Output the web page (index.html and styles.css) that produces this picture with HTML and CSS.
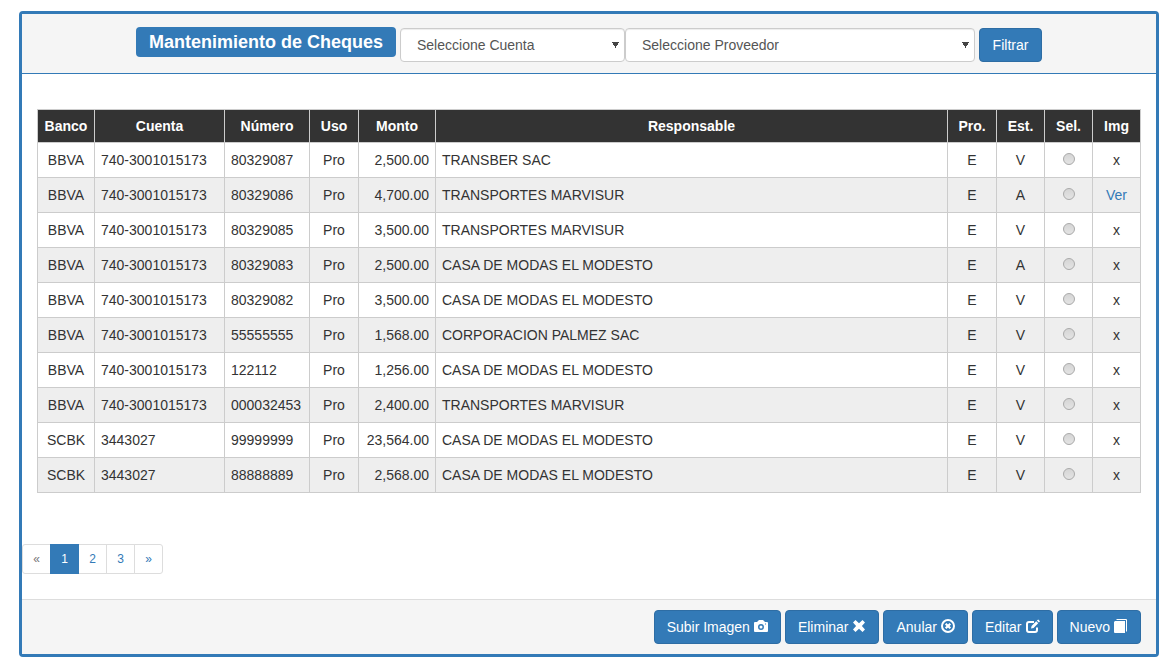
FILE: index.html
```
<!DOCTYPE html>
<html lang="es">
<head>
<meta charset="utf-8">
<title>Mantenimiento de Cheques</title>
<link rel="stylesheet" href="styles.css">
</head>
<body>
<main class="panel">
  <header class="panel-heading">
    <h1 class="title">Mantenimiento de Cheques</h1>
    <form class="filters">
      <select class="select select-account" aria-label="Cuenta"><option>Seleccione Cuenta</option></select>
      <select class="select select-provider" aria-label="Proveedor"><option>Seleccione Proveedor</option></select>
      <button class="btn btn-filter" type="button">Filtrar</button>
    </form>
  </header>
  <div class="panel-body">
    <table class="checks">
      <colgroup>
        <col class="w-bank"><col class="w-account"><col class="w-number"><col class="w-use"><col class="w-amount"><col><col class="w-use"><col class="w-flag"><col class="w-flag"><col class="w-flag">
      </colgroup>
      <thead>
        <tr><th>Banco</th><th>Cuenta</th><th>Número</th><th>Uso</th><th>Monto</th><th>Responsable</th><th>Pro.</th><th>Est.</th><th>Sel.</th><th>Img</th></tr>
      </thead>
      <tbody>
        <tr><td>BBVA</td><td class="left">740-3001015173</td><td class="left">80329087</td><td>Pro</td><td class="right">2,500.00</td><td class="left">TRANSBER SAC</td><td>E</td><td>V</td><td><input class="radio" type="radio" name="sel" aria-label="80329087"></td><td>x</td></tr>
        <tr><td>BBVA</td><td class="left">740-3001015173</td><td class="left">80329086</td><td>Pro</td><td class="right">4,700.00</td><td class="left">TRANSPORTES MARVISUR</td><td>E</td><td>A</td><td><input class="radio" type="radio" name="sel" aria-label="80329086"></td><td><a class="link" href="#">Ver</a></td></tr>
        <tr><td>BBVA</td><td class="left">740-3001015173</td><td class="left">80329085</td><td>Pro</td><td class="right">3,500.00</td><td class="left">TRANSPORTES MARVISUR</td><td>E</td><td>V</td><td><input class="radio" type="radio" name="sel" aria-label="80329085"></td><td>x</td></tr>
        <tr><td>BBVA</td><td class="left">740-3001015173</td><td class="left">80329083</td><td>Pro</td><td class="right">2,500.00</td><td class="left">CASA DE MODAS EL MODESTO</td><td>E</td><td>A</td><td><input class="radio" type="radio" name="sel" aria-label="80329083"></td><td>x</td></tr>
        <tr><td>BBVA</td><td class="left">740-3001015173</td><td class="left">80329082</td><td>Pro</td><td class="right">3,500.00</td><td class="left">CASA DE MODAS EL MODESTO</td><td>E</td><td>V</td><td><input class="radio" type="radio" name="sel" aria-label="80329082"></td><td>x</td></tr>
        <tr><td>BBVA</td><td class="left">740-3001015173</td><td class="left">55555555</td><td>Pro</td><td class="right">1,568.00</td><td class="left">CORPORACION PALMEZ SAC</td><td>E</td><td>V</td><td><input class="radio" type="radio" name="sel" aria-label="55555555"></td><td>x</td></tr>
        <tr><td>BBVA</td><td class="left">740-3001015173</td><td class="left">122112</td><td>Pro</td><td class="right">1,256.00</td><td class="left">CASA DE MODAS EL MODESTO</td><td>E</td><td>V</td><td><input class="radio" type="radio" name="sel" aria-label="122112"></td><td>x</td></tr>
        <tr><td>BBVA</td><td class="left">740-3001015173</td><td class="left">000032453</td><td>Pro</td><td class="right">2,400.00</td><td class="left">TRANSPORTES MARVISUR</td><td>E</td><td>V</td><td><input class="radio" type="radio" name="sel" aria-label="000032453"></td><td>x</td></tr>
        <tr><td>SCBK</td><td class="left">3443027</td><td class="left">99999999</td><td>Pro</td><td class="right">23,564.00</td><td class="left">CASA DE MODAS EL MODESTO</td><td>E</td><td>V</td><td><input class="radio" type="radio" name="sel" aria-label="99999999"></td><td>x</td></tr>
        <tr><td>SCBK</td><td class="left">3443027</td><td class="left">88888889</td><td>Pro</td><td class="right">2,568.00</td><td class="left">CASA DE MODAS EL MODESTO</td><td>E</td><td>V</td><td><input class="radio" type="radio" name="sel" aria-label="88888889"></td><td>x</td></tr>
      </tbody>
    </table>
  </div>
  <nav class="pagination" aria-label="Páginas">
    <a class="page disabled" href="#">«</a>
    <a class="page active" href="#">1</a>
    <a class="page" href="#">2</a>
    <a class="page" href="#">3</a>
    <a class="page" href="#">»</a>
  </nav>
  <footer class="panel-footer">
    <button class="btn" type="button">Subir Imagen
      <svg class="icon" viewBox="0 0 14 14"><path fill="#fff" fill-rule="evenodd" d="M0 4Q0 3 1 3H3L5 1H9L11 3H13Q14 3 14 4V12Q14 13 13 13H1Q0 13 0 12ZM7 5a3 3 0 1 0 0 6a3 3 0 1 0 0-6ZM7 6.500a1.500 1.500 0 1 1 0 3a1.500 1.500 0 1 1 0-3ZM11 4.500h1v1H11Z"/></svg>
    </button>
    <button class="btn" type="button">Eliminar
      <svg class="icon" viewBox="0 0 14 14"><path fill="#fff" d="M3.500 1L7 4.300L10.500 1L13 3.500L9.900 7L13 10.500L10.500 13L7 9.700L3.500 13L1 10.500L4.100 7L1 3.500Z"/></svg>
    </button>
    <button class="btn" type="button">Anular
      <svg class="icon" viewBox="0 0 14 14"><circle cx="7" cy="7" r="6" fill="none" stroke="#fff" stroke-width="2"/><path d="M4.700 4.700L9.300 9.300M9.300 4.700L4.700 9.300" stroke="#fff" stroke-width="2.200"/></svg>
    </button>
    <button class="btn" type="button">Editar
      <svg class="icon" viewBox="0 0 14 14"><path d="M8 3H3Q1 3 1 5V11Q1 13 3 13H9Q11 13 11 11V8.500" fill="none" stroke="#fff" stroke-width="2"/><path fill="#fff" d="M5 9.500L5.600 6.900L10.200 2.300L12.200 4.300L7.600 8.900ZM10.900 1.600L12.200 .500L14 2.300L12.900 3.600Z"/></svg>
    </button>
    <button class="btn" type="button">Nuevo
      <svg class="icon" viewBox="0 0 14 14"><path fill="#fff" d="M1 2H11V14H1Q0 14 0 13V3Z"/><path d="M2.500 .500H12.500V12.500" fill="none" stroke="#fff"/></svg>
    </button>
  </footer>
</main>
</body>
</html>
```
FILE: styles.css
```
* { box-sizing: border-box; }
body {
  margin: 0;
  padding: 11px 9px 14px 19px;
  background: #fff;
  color: #333;
  font: 14px/20px "Liberation Sans", Arial, sans-serif;
}
.panel { border: 3px solid #337ab7; border-radius: 4px; }
.panel-heading {
  display: flex;
  justify-content: center;
  align-items: flex-start;
  gap: 4px;
  padding: 13px 15px 11px;
  background: #f5f5f5;
  border-bottom: 1px solid #337ab7;
}
.title {
  min-width: 260px;
  margin: 0;
  padding: 5px 10px;
  border-radius: 4px;
  background: #337ab7;
  color: #fff;
  font-size: 18px;
  line-height: 20px;
  text-align: center;
}
.filters { display: flex; padding-top: 1px; }
.select {
  appearance: none;
  height: 34px;
  padding: 6px 16px;
  border: 1px solid #ccc;
  border-radius: 4px;
  background: #fff conic-gradient(from 327deg at 50% 100%, #444 66deg, transparent 66deg) no-repeat right 5px center / 7px 6px;
  box-shadow: inset 0 1px 1px rgba(0, 0, 0, .075);
  color: #555;
  font: inherit;
}
.select-account { width: 225px; }
.select-provider { width: 350px; }
.btn {
  display: inline-flex;
  align-items: center;
  justify-content: center;
  gap: 4px;
  height: 34px;
  padding: 6px 12px;
  border: 1px solid #2e6da4;
  border-radius: 4px;
  background: #337ab7;
  color: #fff;
  font: inherit;
  white-space: nowrap;
}
.btn-filter { min-width: 63px; margin-left: 4px; }
.icon { width: 14px; height: 14px; margin-bottom: 2px; overflow: visible; }
.panel-body { padding: 35px 15px; }
.checks { width: 100%; table-layout: fixed; border-collapse: collapse; }
.checks th, .checks td {
  height: 35px;
  padding: 0 6px;
  border: 1px solid #ccc;
  text-align: center;
  white-space: nowrap;
}
.checks th { height: 33px; background: #333; color: #fff; }
.checks tbody tr:nth-child(even) { background: #eee; }
.checks .left { text-align: left; }
.checks .right { text-align: right; }
.w-bank { width: 57px; }
.w-account { width: 130px; }
.w-number { width: 85px; }
.w-use { width: 49px; }
.w-amount { width: 77px; }
.w-flag { width: 48px; }
.radio {
  appearance: none;
  display: block;
  width: 12px;
  height: 12px;
  margin: 0 auto 2px;
  border: 1px solid #aaa;
  border-radius: 50%;
  background: linear-gradient(#d5d5d5, #e4e4e4);
}
.link { color: #337ab7; text-decoration: none; }
.pagination { display: flex; padding: 16px 0 25px; }
.page {
  min-width: 29px;
  height: 30px;
  margin-right: -1px;
  padding: 5px 0;
  border: 1px solid #ddd;
  background: #fff;
  color: #337ab7;
  font-size: 12px;
  line-height: 18px;
  text-align: center;
  text-decoration: none;
}
.page:first-child { border-radius: 3px 0 0 3px; }
.page:last-child { border-radius: 0 3px 3px 0; }
.page.disabled { color: #777; }
.page.active { z-index: 1; background: #337ab7; border-color: #337ab7; color: #fff; }
.panel-footer {
  display: flex;
  justify-content: flex-end;
  gap: 4px;
  padding: 10px 15px;
  border-top: 1px solid #ddd;
  background: #f5f5f5;
}
```
